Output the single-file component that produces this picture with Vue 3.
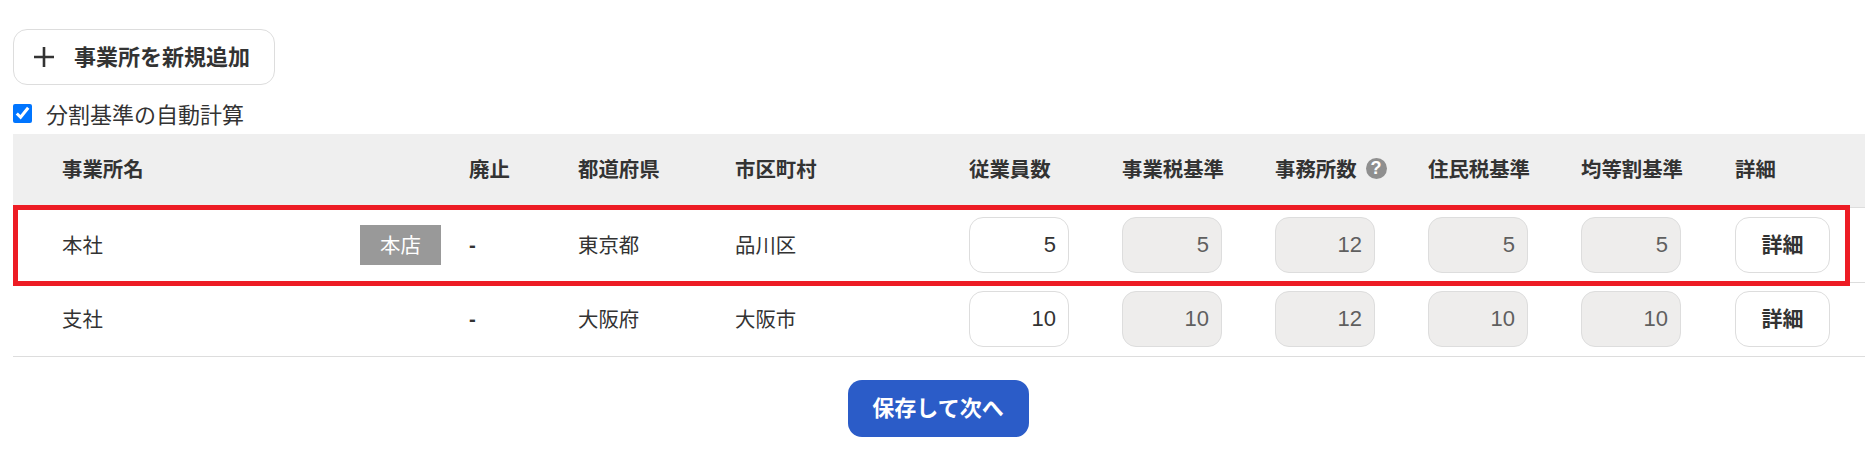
<template>
  <div class="office-page">
    <button class="add-btn" type="button">
      <svg class="plus-icon" viewBox="0 0 20 20" aria-hidden="true">
        <path d="M10 0V20M0 10H20" />
      </svg>
      <span class="add-label">事業所を新規追加</span>
    </button>

    <label class="auto-calc">
      <input v-model="autoCalc" type="checkbox" />
      <span>分割基準の自動計算</span>
    </label>

    <div class="office-table">
      <div class="table-row table-head">
        <div class="name-cell">事業所名</div>
        <div>廃止</div>
        <div>都道府県</div>
        <div>市区町村</div>
        <div>従業員数</div>
        <div>事業税基準</div>
        <div class="help-cell">
          事務所数
          <span class="help-icon">?</span>
        </div>
        <div>住民税基準</div>
        <div>均等割基準</div>
        <div>詳細</div>
      </div>

      <div v-for="office in offices" :key="office.name" class="table-row">
        <div class="name-cell">
          <span class="text-cell">{{ office.name }}</span>
          <span v-if="office.isHead" class="head-badge">本店</span>
        </div>
        <div class="dash">-</div>
        <div class="text-cell">{{ office.pref }}</div>
        <div class="text-cell">{{ office.city }}</div>
        <div><input class="num-input" type="text" :value="office.staff" /></div>
        <div><input class="num-input" type="text" :value="office.bizTax" disabled /></div>
        <div><input class="num-input" type="text" :value="office.offices" disabled /></div>
        <div><input class="num-input" type="text" :value="office.resTax" disabled /></div>
        <div><input class="num-input" type="text" :value="office.equal" disabled /></div>
        <div><button class="detail-btn" type="button">詳細</button></div>
      </div>

      <div class="highlight"></div>
    </div>

    <div class="actions">
      <button class="save-btn" type="button">保存して次へ</button>
    </div>
  </div>
</template>

<script setup>
import { ref } from 'vue'

const autoCalc = ref(true)

const offices = [
  { name: '本社', isHead: true, pref: '東京都', city: '品川区', staff: 5, bizTax: 5, offices: 12, resTax: 5, equal: 5 },
  { name: '支社', isHead: false, pref: '大阪府', city: '大阪市', staff: 10, bizTax: 10, offices: 12, resTax: 10, equal: 10 }
]
</script>

<style>
body {
  background: #fff;
}
</style>

<style scoped>
.office-page {
  padding: 29px 2px 18px 13px;
  font-family: "Liberation Sans", "Noto Sans CJK JP", sans-serif;
  color: #333;
  font-size: 20.4px;
}

.add-btn {
  display: flex;
  align-items: center;
  gap: 20px;
  width: 262px;
  height: 56px;
  padding: 0 0 0 20px;
  background: #fff;
  border: 1px solid #ddd;
  border-radius: 14px;
  font-family: inherit;
  font-size: 22px;
  font-weight: 700;
  color: #333;
}

.add-label {
  padding-bottom: 4px;
}

.plus-icon {
  width: 20px;
  height: 20px;
  flex-shrink: 0;
}

.plus-icon path {
  fill: none;
  stroke: #333;
  stroke-width: 2.6;
}

.auto-calc {
  display: flex;
  align-items: center;
  gap: 14px;
  height: 41px;
  margin-top: 8px;
  font-size: 22px;
}

.auto-calc span {
  padding-bottom: 2px;
}

.auto-calc input {
  width: 19px;
  height: 19px;
  margin: 0;
}

.office-table {
  position: relative;
}

.table-row {
  display: grid;
  grid-template-columns: 456px 109px 157px 234px 153px 153px 153px 153px 154px 130px;
  align-items: center;
  box-sizing: border-box;
  height: 74.4px;
  border-bottom: 1px solid #ddd;
}

.table-head {
  padding-bottom: 5px;
  background: #efefef;
  font-weight: 700;
}

.text-cell {
  padding-bottom: 2px;
}

.name-cell {
  display: flex;
  align-items: center;
  justify-content: space-between;
  padding: 0 28px 0 49px;
}

.help-cell {
  display: flex;
  align-items: center;
  gap: 9px;
}

.help-icon {
  display: flex;
  align-items: center;
  justify-content: center;
  width: 21px;
  height: 21px;
  border-radius: 50%;
  background: #8f8f8f;
  color: #fff;
  font-size: 18px;
  font-weight: 700;
}

.head-badge {
  display: flex;
  align-items: center;
  justify-content: center;
  box-sizing: border-box;
  width: 81px;
  height: 40px;
  padding-bottom: 3px;
  background: #999;
  color: #fff;
}

.dash {
  font-weight: 700;
}

.num-input {
  display: block;
  box-sizing: border-box;
  width: 100px;
  height: 56px;
  padding: 0 12px 0 0;
  background: #fff;
  border: 1px solid #ddd;
  border-radius: 14px;
  font-family: inherit;
  font-size: 22px;
  color: #333;
  text-align: right;
}

.num-input:disabled {
  background: #eeedec;
  color: #5f5f5f;
}

.detail-btn {
  display: block;
  width: 95px;
  height: 56px;
  padding: 0 0 4px;
  background: #fff;
  border: 1px solid #ddd;
  border-radius: 14px;
  font-family: inherit;
  font-size: 21px;
  font-weight: 700;
  color: #333;
}

/* 本社の行を囲む赤枠 */
.highlight {
  position: absolute;
  top: 71px;
  left: 0;
  box-sizing: border-box;
  width: 1837px;
  height: 81px;
  border: 5px solid #ed1c24;
  pointer-events: none;
}

.actions {
  display: flex;
  justify-content: center;
  margin-top: 23px;
  padding-right: 2px;
}

.save-btn {
  width: 181px;
  height: 57px;
  padding: 0 0 5px;
  background: #2b5cc8;
  border: none;
  border-radius: 14px;
  font-family: inherit;
  font-size: 22px;
  font-weight: 700;
  color: #fff;
}
</style>
